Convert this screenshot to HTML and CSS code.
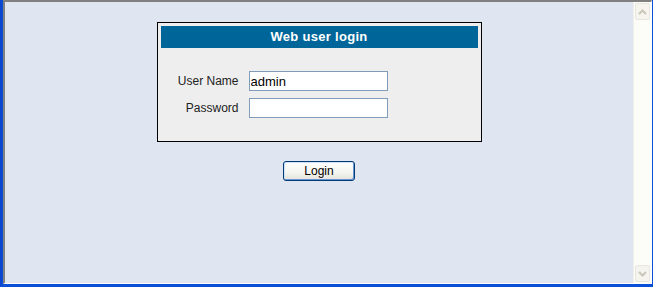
FILE: index.html
```html
<!DOCTYPE html>
<html>
  <head>
    <meta charset="utf-8">
    <title>Web user login</title>
    <link rel="stylesheet" href="styles.css">
  </head>
  <body>
    <div class="window">
      <div class="view">
        <div class="page">
          <form class="login">
            <div class="loginBox">
              <div class="loginTitle">Web user login</div>
              <div class="fields">
                <label for="user">User Name</label>
                <input id="user" type="text" value="admin">
                <label for="pass">Password</label>
                <input id="pass" type="password">
              </div>
            </div>
            <button type="button" class="loginButton">Login</button>
          </form>
        </div>
        <div class="scrollbar">
          <div class="scrollBtn">
            <svg width="9" height="6" viewBox="0 0 9 6"><path d="M1 5 L4.5 1.5 L8 5" fill="none" stroke="#c9c7ba" stroke-width="2"/></svg>
          </div>
          <div class="scrollTrack"></div>
          <div class="scrollBtn">
            <svg width="9" height="6" viewBox="0 0 9 6"><path d="M1 1 L4.5 4.5 L8 1" fill="none" stroke="#c9c7ba" stroke-width="2"/></svg>
          </div>
        </div>
      </div>
    </div>
  </body>
</html>
```

FILE: styles.css
```css
html, body {
  margin: 0;
  padding: 0;
}

body {
  width: 653px;
  height: 287px;
  overflow: hidden;
  font-family: "Liberation Sans", Arial, sans-serif;
}

.window {
  box-sizing: border-box;
  height: 287px;
  display: flex;
  background: #0a4fd8;
  border-left: 2px solid #0a45cf;
  border-right: 1px solid #0a4fd8;
  border-bottom: 3px solid #0a4fd8;
  padding-left: 1px;
}

.view {
  flex: 1;
  display: flex;
  border-top: 2px solid #808080;
  border-left: 2px solid #808080;
  border-right: 1px solid #ffffff;
  border-bottom: 1px solid #ffffff;
  background: #dfe6f2;
}

.page {
  flex: 1;
  display: flex;
  justify-content: center;
}

/* login form */
.login {
  display: flex;
  flex-direction: column;
  align-items: center;
  margin-top: 20px;
}

.loginBox {
  width: 317px;
  padding: 3px;
  border: 1px solid #000;
  background: #eeeeee;
}

.loginTitle {
  height: 22px;
  line-height: 22px;
  background: #006699;
  color: #fff;
  font-weight: bold;
  font-size: 13px;
  letter-spacing: 0.3px;
  text-align: center;
}

.fields {
  display: grid;
  grid-template-columns: 78px 139px;
  column-gap: 10px;
  row-gap: 7px;
  align-items: center;
  padding: 23px 0 20px 0;
}

.fields label {
  text-align: right;
  font-size: 12px;
  color: #222;
}

.fields input {
  box-sizing: border-box;
  width: 139px;
  height: 20px;
  margin: 0;
  padding: 0 1px;
  border: 1px solid #7f9db9;
  background: #fff;
  font-family: "Liberation Sans", Arial, sans-serif;
  font-size: 13px;
  color: #000;
  outline: none;
}

.loginButton {
  margin-top: 19px;
  width: 72px;
  height: 20px;
  padding: 0;
  border: 1px solid #003c74;
  border-radius: 3px;
  background: linear-gradient(#ffffff, #f4f4f0 60%, #e3e2da);
  box-shadow: inset -1px -1px 0 #6c93d6, inset 1px 1px 0 #cfe0fb;
  font-family: "Liberation Sans", Arial, sans-serif;
  font-size: 12px;
  color: #000;
}

/* disabled scrollbar on the right */
.scrollbar {
  width: 17px;
  display: flex;
  flex-direction: column;
  background: #fcfcf9;
  border-left: 1px solid #f0efe8;
}

.scrollBtn {
  box-sizing: border-box;
  height: 17px;
  margin: 1px;
  border: 1px solid #e8e7df;
  border-radius: 2px;
  background: #f5f4ee;
  display: flex;
  align-items: center;
  justify-content: center;
}

.scrollTrack {
  flex: 1;
}
```
